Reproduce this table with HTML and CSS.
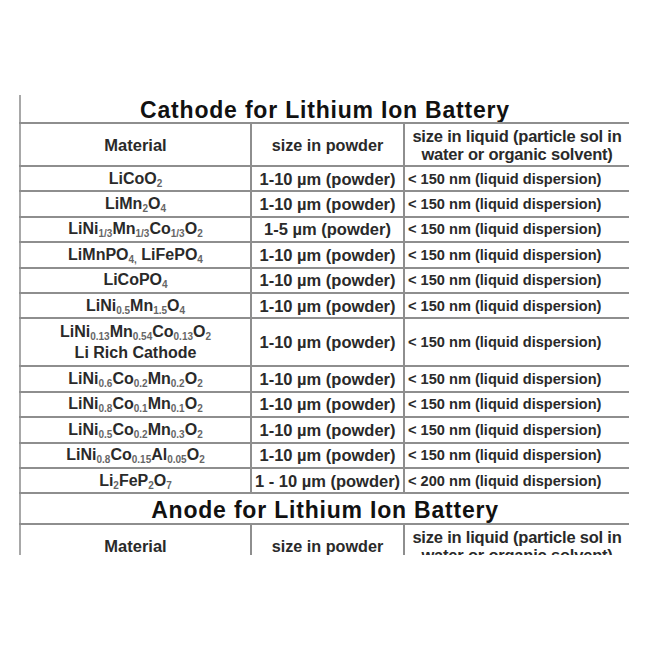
FILE: index.html
```html
<!DOCTYPE html>
<html>
<head>
<meta charset="utf-8">
<link rel="stylesheet" href="styles.css">
</head>
<body>
<div class="page">
  <div class="clip">
    <table class="sheet">
      <colgroup><col class="c1"><col class="c2"><col class="c3"></colgroup>
      <tr class="title"><td colspan="3">Cathode for Lithium Ion Battery</td></tr>
      <tr class="head"><td>Material</td><td>size in powder</td><td>size in liquid (particle sol in<br>water or organic solvent)</td></tr>
      <tr><td>LiCoO<sub>2</sub></td><td class="pw">1-10 µm (powder)</td><td class="lq">&lt; 150 nm (liquid dispersion)</td></tr>
      <tr><td>LiMn<sub>2</sub>O<sub>4</sub></td><td class="pw">1-10 µm (powder)</td><td class="lq">&lt; 150 nm (liquid dispersion)</td></tr>
      <tr><td>LiNi<sub>1/3</sub>Mn<sub>1/3</sub>Co<sub>1/3</sub>O<sub>2</sub></td><td class="pw">1-5 µm (powder)</td><td class="lq">&lt; 150 nm (liquid dispersion)</td></tr>
      <tr><td>LiMnPO<sub>4,</sub> LiFePO<sub>4</sub></td><td class="pw">1-10 µm (powder)</td><td class="lq">&lt; 150 nm (liquid dispersion)</td></tr>
      <tr><td>LiCoPO<sub>4</sub></td><td class="pw">1-10 µm (powder)</td><td class="lq">&lt; 150 nm (liquid dispersion)</td></tr>
      <tr><td>LiNi<sub>0.5</sub>Mn<sub>1.5</sub>O<sub>4</sub></td><td class="pw">1-10 µm (powder)</td><td class="lq">&lt; 150 nm (liquid dispersion)</td></tr>
      <tr class="dbl"><td>LiNi<sub>0.13</sub>Mn<sub>0.54</sub>Co<sub>0.13</sub>O<sub>2</sub><br>Li Rich Cathode</td><td class="pw">1-10 µm (powder)</td><td class="lq">&lt; 150 nm (liquid dispersion)</td></tr>
      <tr><td>LiNi<sub>0.6</sub>Co<sub>0.2</sub>Mn<sub>0.2</sub>O<sub>2</sub></td><td class="pw">1-10 µm (powder)</td><td class="lq">&lt; 150 nm (liquid dispersion)</td></tr>
      <tr><td>LiNi<sub>0.8</sub>Co<sub>0.1</sub>Mn<sub>0.1</sub>O<sub>2</sub></td><td class="pw">1-10 µm (powder)</td><td class="lq">&lt; 150 nm (liquid dispersion)</td></tr>
      <tr><td>LiNi<sub>0.5</sub>Co<sub>0.2</sub>Mn<sub>0.3</sub>O<sub>2</sub></td><td class="pw">1-10 µm (powder)</td><td class="lq">&lt; 150 nm (liquid dispersion)</td></tr>
      <tr><td>LiNi<sub>0.8</sub>Co<sub>0.15</sub>Al<sub>0.05</sub>O<sub>2</sub></td><td class="pw">1-10 µm (powder)</td><td class="lq">&lt; 150 nm (liquid dispersion)</td></tr>
      <tr><td>Li<sub>2</sub>FeP<sub>2</sub>O<sub>7</sub></td><td class="pw">1 - 10 µm (powder)</td><td class="lq">&lt; 200 nm (liquid dispersion)</td></tr>
      <tr class="title title2"><td colspan="3">Anode for Lithium Ion Battery</td></tr>
      <tr class="head"><td>Material</td><td>size in powder</td><td>size in liquid (particle sol in<br>water or organic solvent)</td></tr>
    </table>
  </div>
</div>
</body>
</html>
```
FILE: styles.css
```css
html, body {
  margin: 0;
  padding: 0;
  background: #ffffff;
}
.page {
  width: 650px;
  height: 650px;
  padding-top: 95px;
  padding-left: 19px;
  box-sizing: border-box;
}
.clip {
  width: 610px;
  height: 460px;
  overflow: hidden;
}
.sheet {
  width: 610px;
  border-collapse: collapse;
  table-layout: fixed;
  font-family: "Liberation Sans", Arial, sans-serif;
  font-weight: bold;
  color: #2a2a2a;
}
.c1 { width: 231px; }
.c2 { width: 153px; }
.c3 { width: 226px; }
.sheet td {
  border: 2px solid #8e8e8e;
  padding: 0 1px;
  text-align: center;
  vertical-align: middle;
  font-size: 16px;
  line-height: 18px;
  white-space: nowrap;
  overflow: hidden;
}
.sheet tr {
  height: 25.4px;
}
.sheet tr.title {
  height: 28px;
}
.sheet tr.title td {
  border-top: none;
  font-size: 23px;
  letter-spacing: 0.8px;
  color: #111;
  line-height: 24px;
  padding-top: 2px;
}
.sheet tr.title2 {
  height: 31px;
}
.sheet tr.title2 td {
  border-top: 2px solid #8e8e8e;
}
.sheet tr.head {
  height: 43px;
}
.sheet tr.head td {
  font-size: 16.5px;
  line-height: 18px;
}
.sheet tr.head td:nth-child(2) {
  font-size: 16.2px;
}
.sheet tr.head td:nth-child(3) {
  font-size: 16.5px;
  letter-spacing: -0.2px;
}
.sheet tr.dbl {
  height: 48px;
}
.sheet tr.dbl td:first-child {
  line-height: 21px;
}
.sheet td.pw {
  font-size: 16.5px;
}
.sheet td.lq {
  text-align: left;
  padding-left: 3px;
  font-size: 14.6px;
}
.sheet td:first-child {
  border-left-color: #a8a8a8;
}
.sheet td:last-child {
  border-right-color: #a8a8a8;
}
sub {
  font-size: 10px;
  line-height: 0;
  color: #666;
  vertical-align: -3px;
}
```
